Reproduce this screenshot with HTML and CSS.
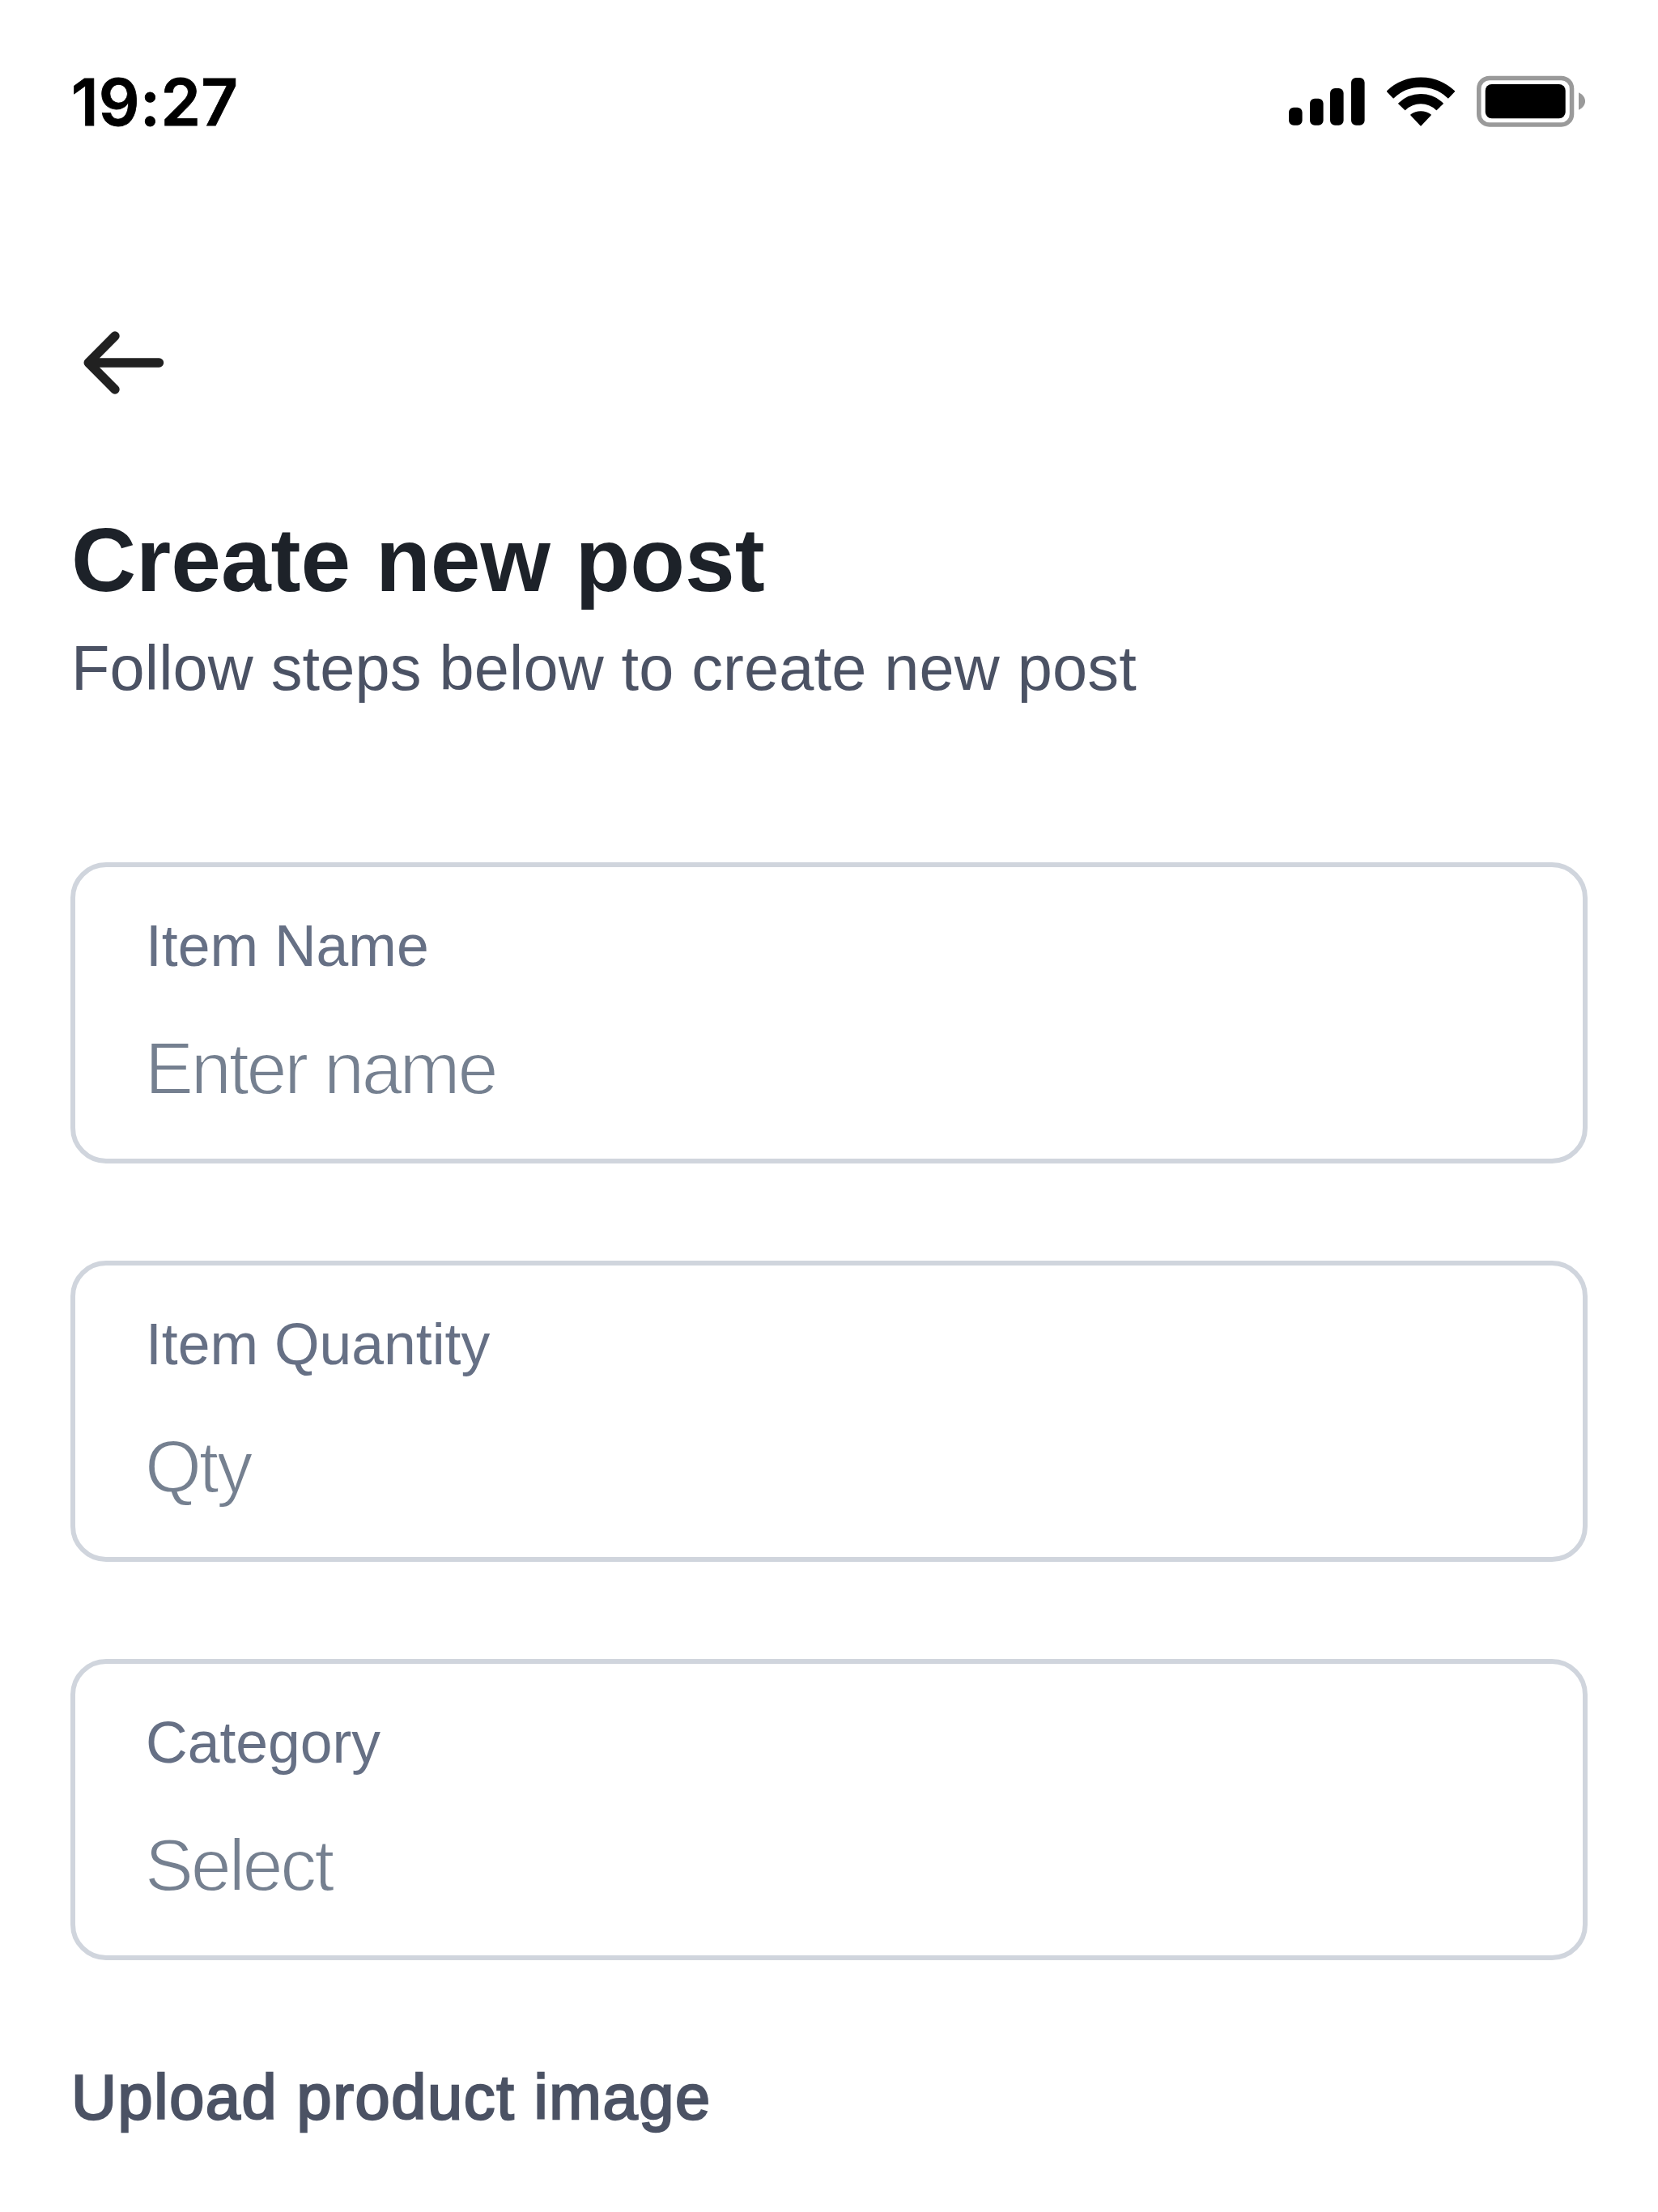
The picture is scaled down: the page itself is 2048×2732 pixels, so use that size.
FILE: index.html
```html
<!DOCTYPE html>
<html lang="en">
<head>
<meta charset="utf-8">
<title>Create new post</title>
<link rel="stylesheet" href="styles.css">
</head>
<body>
<div class="screen">
  <div class="status-bar">
    <span class="time">19:27</span>
    <div class="status-icons">
      <svg width="94" height="64" viewBox="0 0 94 64" aria-hidden="true">
        <rect x="0" y="39.7" width="16.6" height="22" rx="6"/>
        <rect x="26" y="28.7" width="16.6" height="33" rx="6"/>
        <rect x="51" y="16" width="16.6" height="45.7" rx="6"/>
        <rect x="77" y="3" width="16.6" height="58.7" rx="6"/>
      </svg>
      <svg class="wifi" width="85" height="64" viewBox="0.5 0 85 64" aria-hidden="true">
        <path d="M1.1 19.8A60.5 60.5 0 0 1 83.9 19.8L76.3 27.7A48.5 48.5 0 0 0 8.7 27.7Z"/>
        <path d="M15.5 34.9A38.5 38.5 0 0 1 69.5 34.9L61.7 42.3A27.5 27.5 0 0 0 23.3 42.3Z"/>
        <path d="M30.5 49A20 20 0 0 1 54.5 49L42.5 61.7Z"/>
      </svg>
      <svg width="134" height="64" viewBox="0 0 134 64" aria-hidden="true">
        <rect x="2.75" y="3.45" width="114.8" height="57.5" rx="13" fill="none" stroke="#9a9a9a" stroke-width="5.5"/>
        <rect x="10.7" y="10.9" width="99" height="42.4" rx="8"/>
        <path d="M126 21.3C131 23.5 134 27.5 134 32S131 40.5 126 42.7Z" fill="#9a9a9a"/>
      </svg>
    </div>
  </div>
  <main class="content">
    <svg class="back" width="131" height="131" viewBox="0 0 131 131" role="img" aria-label="Back">
      <path d="M109.5 66H22.2M55 33L22.2 66L55 99"/>
    </svg>
    <h1 class="title">Create new post</h1>
    <p class="subtitle">Follow steps below to create new post</p>
    <div class="form">
      <div class="field">
        <div class="label">Item Name</div>
        <div class="placeholder">Enter name</div>
      </div>
      <div class="field">
        <div class="label">Item Quantity</div>
        <div class="placeholder">Qty</div>
      </div>
      <div class="field">
        <div class="label">Category</div>
        <div class="placeholder">Select</div>
      </div>
    </div>
    <h2 class="section-title">Upload product image</h2>
  </main>
</div>
</body>
</html>
```
FILE: styles.css
```css
* { box-sizing: border-box; }

body {
  margin: 0;
  background: #fff;
  font-family: "Liberation Sans", Arial, sans-serif;
}

.screen {
  height: 2732px;
  overflow: hidden;
}

.status-bar {
  display: flex;
  justify-content: space-between;
  height: 240px;
  padding: 76px 90px 0 88px;
}

.time {
  font-family: Inter, sans-serif;
  font-size: 79.5px;
  font-weight: 600;
  line-height: 100px;
  letter-spacing: 0.2px;
  color: #000;
  -webkit-text-stroke: 0.8px #000;
}

.status-icons {
  display: flex;
  gap: 26.5px;
  height: 64px;
  margin-top: 17px;
}

.wifi {
  stroke: #000;
  stroke-width: 1.6;
  stroke-linejoin: round;
}

.content {
  display: flex;
  flex-direction: column;
  padding: 142px 87px 0;
}

.back {
  fill: none;
  stroke: #212121;
  stroke-width: 11.4;
  stroke-linecap: round;
  stroke-linejoin: round;
}

.title {
  margin: 106px 0 0 1px;
  font-size: 111px;
  line-height: 147px;
  letter-spacing: -0.05px;
  color: #1d2229;
}

.subtitle {
  margin: 0 0 0 1px;
  font-size: 77.5px;
  line-height: 118px;
  letter-spacing: 0.17px;
  color: #4b5264;
}

.form {
  display: flex;
  flex-direction: column;
  gap: 120px;
  margin-top: 181px;
}

.field {
  display: flex;
  flex-direction: column;
  gap: 42px;
  height: 372px;
  padding: 47px 86px 0;
  border: 6px solid #d0d5dd;
  border-radius: 44px;
}

.label {
  padding-left: 1px;
  font-size: 71.5px;
  line-height: 100px;
  letter-spacing: 0;
  color: #667085;
}

/* The background-coloured stroke trims the glyphs to a light weight. */
.placeholder {
  font-size: 90px;
  line-height: 120px;
  letter-spacing: -3.2px;
  color: #758090;
  -webkit-text-stroke: 1.8px #fff;
}

.section-title {
  margin: 110px 0 0 1px;
  font-size: 77.5px;
  font-weight: 400;
  line-height: 118px;
  letter-spacing: 1.62px;
  color: #4b5264;
  -webkit-text-stroke: 2.4px #4b5264;
}
```
